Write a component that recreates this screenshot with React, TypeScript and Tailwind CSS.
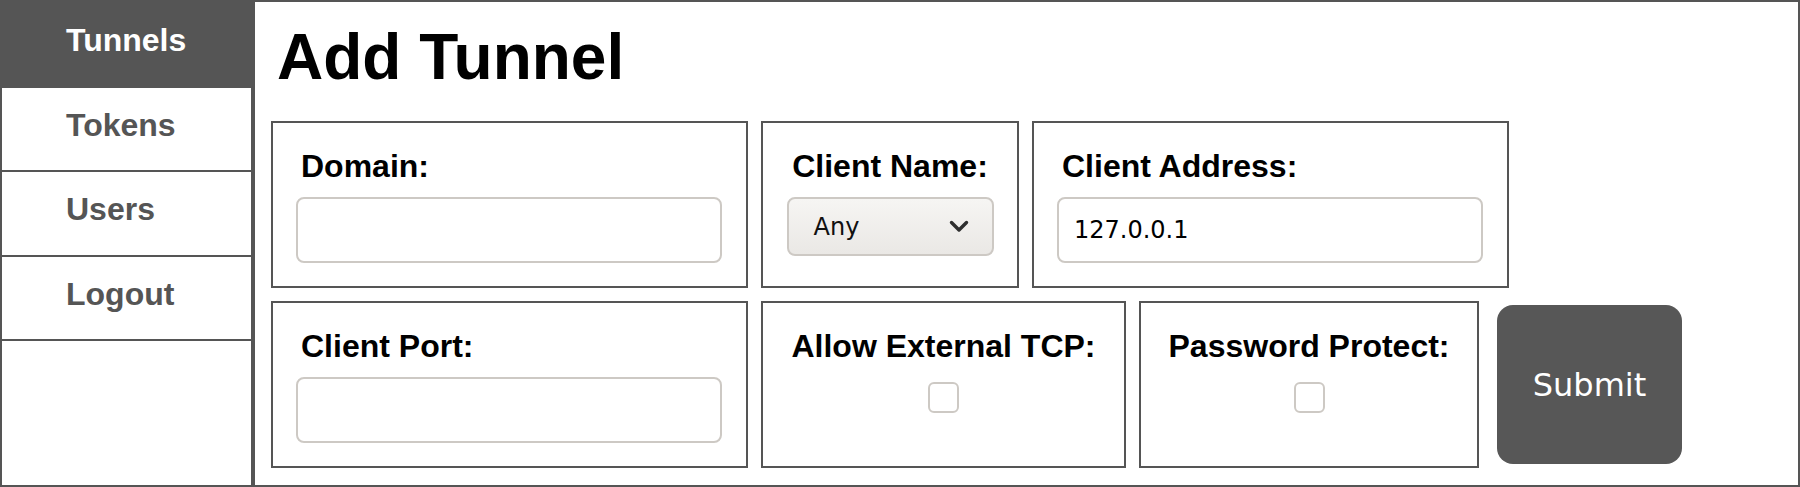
import React from "react";

function Chevron() {
  return (
    <svg width="20" height="13" viewBox="0 0 20 13" fill="none">
      <polyline
        points="2.5,2.5 10,10 17.5,2.5"
        stroke="#2f2f2f"
        strokeWidth="3.4"
        strokeLinecap="round"
        strokeLinejoin="round"
      />
    </svg>
  );
}

function TextField({ label, value }: { label: string; value?: string }) {
  return (
    <div className="w-[477px] border-2 border-[#555] px-[23px] pt-[25px] pb-[23px] flex flex-col">
      <div className="pl-[5px] text-[32px] leading-[37px] font-bold text-black">{label}</div>
      <div className="mt-[12px] h-[66px] w-[426px] rounded-[8px] border-2 border-[#cdc9c4] bg-white flex items-center pl-[15px] font-['DejaVu_Sans',sans-serif] text-[24px] text-black">
        {value ?? ""}
      </div>
    </div>
  );
}

function CheckField({ label, width }: { label: string; width: string }) {
  return (
    <div className={width + " border-2 border-[#555] pt-[25px] flex flex-col items-center"}>
      <div className="text-[32px] leading-[37px] font-bold text-black whitespace-nowrap">{label}</div>
      <div className="mt-[17px] h-[31px] w-[31px] rounded-[6px] border-2 border-[#cdc9c4] bg-white"></div>
    </div>
  );
}

export default function App() {
  const items = ["Tunnels", "Tokens", "Users", "Logout"];
  return (
    <div className="flex h-[487px] w-[1800px] bg-white font-['Liberation_Sans',Arial,sans-serif] text-black">
      <nav className="w-[253px] h-full shrink-0 border-2 border-[#555] flex flex-col">
        {items.map((it, i) => (
          <div
            key={it}
            className={
              i === 0
                ? "h-[85.5px] shrink-0 border-b-2 border-[#555] bg-[#555] pl-[64px] pt-[20px] text-[32px] leading-[37px] font-bold text-white"
                : "h-[84.5px] shrink-0 border-b-2 border-[#555] bg-white pl-[64px] pt-[19px] text-[32px] leading-[37px] font-bold text-[#555]"
            }
          >
            {it}
          </div>
        ))}
      </nav>
      <main className="flex-1 h-full border-2 border-[#555] pl-[16px]">
        <h1 className="mt-[18px] ml-[6px] text-[64px] leading-[74px] font-bold text-black">Add Tunnel</h1>
        <div className="mt-[27px] flex flex-col gap-[13px]">
          <div className="flex gap-[13px] items-stretch">
            <TextField label="Domain:" />
            <div className="w-[258px] border-2 border-[#555] pt-[25px] flex flex-col items-center">
              <div className="text-[32px] leading-[37px] font-bold text-black whitespace-nowrap">Client Name:</div>
              <div className="mt-[12px] h-[59px] w-[207px] rounded-[8px] border-2 border-[#cdc9c4] bg-gradient-to-b from-[#f6f5f3] to-[#eae8e5] flex items-center justify-between pl-[25px] pr-[23px] font-['DejaVu_Sans',sans-serif] text-[24px] text-[#111]">
                <span>Any</span>
                <Chevron />
              </div>
            </div>
            <TextField label="Client Address:" value="127.0.0.1" />
          </div>
          <div className="flex gap-[13px] items-stretch">
            <TextField label="Client Port:" />
            <CheckField label="Allow External TCP:" width="w-[365px]" />
            <CheckField label="Password Protect:" width="w-[340px]" />
            <div className="ml-[5px] self-center h-[159px] w-[185px] rounded-[16px] bg-[#575757] flex items-center justify-center font-['DejaVu_Sans',sans-serif] text-[32px] text-white">
              Submit
            </div>
          </div>
        </div>
      </main>
    </div>
  );
}
